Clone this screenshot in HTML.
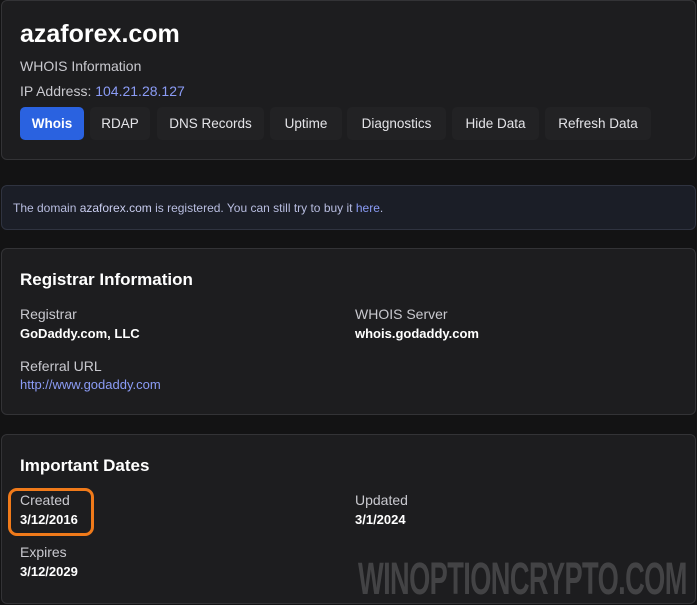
<!DOCTYPE html>
<html><head><style>
body{margin:0;background:#131314;font-family:"Liberation Sans",sans-serif;width:697px;height:600px;overflow:hidden;position:relative;color:#e6e6e6}
.card{position:absolute;left:1px;right:1px;background:#1d1d1f;border:1px solid #333336;border-radius:6px;box-sizing:border-box}
.t{position:absolute;white-space:nowrap}
.lab{font-size:14px;color:#c9c9cf}
.val{font-size:13px;font-weight:bold;color:#fff}
.tab{position:absolute;top:107px;height:33px;line-height:33px;font-size:13.5px;color:#e4e4e8;background:#222224;border-radius:5px;text-align:center}
a{color:#8b9cf6;text-decoration:none}
</style></head><body>
<div class="card" style="top:0;height:160px"></div>
<div class="t" style="left:20px;top:20px;font-size:25px;font-weight:bold;color:#fff">azaforex.com</div>
<div class="t lab" style="left:20px;top:58px">WHOIS Information</div>
<div class="t lab" style="left:20px;top:83px">IP Address: <a>104.21.28.127</a></div>
<div class="tab" style="left:20px;width:64px;background:#2a62e0;color:#fff;font-weight:bold">Whois</div>
<div class="tab" style="left:90px;width:60px">RDAP</div>
<div class="tab" style="left:157px;width:107px">DNS Records</div>
<div class="tab" style="left:270px;width:72px">Uptime</div>
<div class="tab" style="left:347px;width:99px">Diagnostics</div>
<div class="tab" style="left:452px;width:87px">Hide Data</div>
<div class="tab" style="left:545px;width:106px">Refresh Data</div>

<div class="card" style="top:185px;height:45px;background:#1b1e27;border-color:#2f3340"></div>
<div class="t" style="left:13px;top:201px;font-size:12px;color:#b8bde0">The domain <span style="color:#c9cdf0">azaforex.com</span> is registered. You can still try to buy it <a>here</a>.</div>

<div class="card" style="top:248px;height:167px"></div>
<div class="t" style="left:20px;top:270px;font-size:17px;font-weight:bold;color:#fff">Registrar Information</div>
<div class="t lab" style="left:20px;top:306px">Registrar</div>
<div class="t val" style="left:20px;top:326px">GoDaddy.com, LLC</div>
<div class="t lab" style="left:355px;top:306px">WHOIS Server</div>
<div class="t val" style="left:355px;top:326px">whois.godaddy.com</div>
<div class="t lab" style="left:20px;top:358px">Referral URL</div>
<div class="t" style="left:20px;top:377px;font-size:13px"><a>http://www.godaddy.com</a></div>

<div class="card" style="top:434px;height:170px"></div>
<div class="t" style="left:20px;top:456px;font-size:17px;font-weight:bold;color:#fff">Important Dates</div>
<div style="position:absolute;left:8px;top:488px;width:80px;height:42px;border:3px solid #f07a1a;border-radius:9px"></div>
<div class="t lab" style="left:20px;top:492px">Created</div>
<div class="t val" style="left:20px;top:512px">3/12/2016</div>
<div class="t lab" style="left:355px;top:492px">Updated</div>
<div class="t val" style="left:355px;top:512px">3/1/2024</div>
<div class="t lab" style="left:20px;top:544px">Expires</div>
<div class="t val" style="left:20px;top:564px">3/12/2029</div>
<div class="t" style="left:358px;top:553px;font-size:45px;font-weight:bold;color:#434345;letter-spacing:-1px;transform:scaleX(0.605);transform-origin:left top">WINOPTIONCRYPTO.COM</div>
</body></html>
